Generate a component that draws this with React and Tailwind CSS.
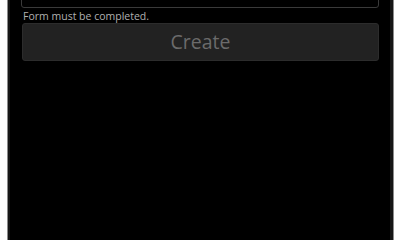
import React from "react";

export default function App() {
    return (
        <div className="h-screen w-full overflow-hidden bg-white pl-[7px] pr-[6px]">
            <div className="h-full border-x border-[#8c8c8c]">
                <div className="h-full overflow-hidden border-l-[2px] border-r-[3px] border-[#161616] bg-black pl-[11px] pr-[11px]">
                    <form className="-mt-[34px] flex flex-col" style={{ fontFamily: '"Open Sans", "DejaVu Sans", sans-serif' }}>
                        {/* field scrolled above the top */}
                        <input
                            type="text"
                            className="h-[42px] w-full rounded-[3px] border border-[#3a3a3a] bg-black px-2 text-white outline-none"
                        />
                        <p className="mt-[1px] pl-[2px] text-[10.5px] leading-[14px] text-[#b0b0b0]">
                            Form must be completed.
                        </p>
                        <button
                            type="button"
                            disabled
                            className="ml-[1px] h-[38px] rounded-[3px] border border-[#2c2c2c] bg-[#222222] text-[19.5px] leading-none text-[#6b6b6b]"
                        >
                            Create
                        </button>
                    </form>
                </div>
            </div>
        </div>
    );
}
